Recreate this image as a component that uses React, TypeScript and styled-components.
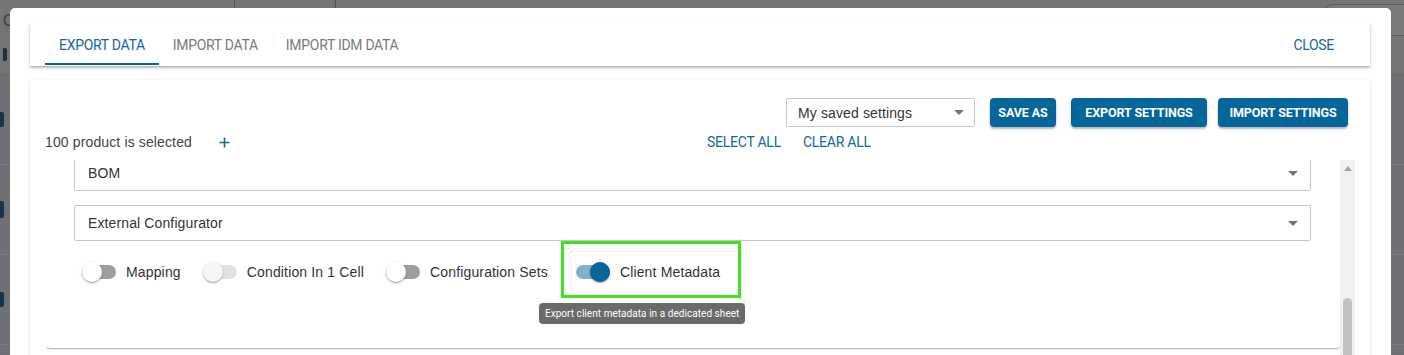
import React, { useLayoutEffect, useRef } from "react";
import styled, { createGlobalStyle } from "styled-components";

const PRIMARY = "#04669b";
const LINK = "#1169a1";

const GlobalStyle = createGlobalStyle`
  html, body {
    margin: 0;
    padding: 0;
  }

  body {
    background: #6f7174;
    font-family: "Liberation Sans", Arial, sans-serif;
    overflow: hidden;
  }
`;

/* ---------- page behind the dialog ---------- */

const Page = styled.div`
  display: flex;
  flex-direction: column;
  height: 355px;
`;

const PageHeader = styled.div`
  height: 74px;
  background: #747474;
  border-bottom: 1px solid #6a6a6a;
  display: flex;
  justify-content: space-between;
  padding-left: 3px;
`;

const HeaderLeft = styled.div`
  display: flex;
  flex-direction: column;
  gap: 18px;
  padding-top: 12px;
  color: #3c3c3c;
  font-size: 16px;
`;

const HeaderField = styled.div`
  width: 100px;
  height: 12px;
  margin: -5px 0 0 219px;
  border: 1px solid #505050;
  border-radius: 3px;
`;

const HeaderPill = styled.div`
  width: 80px;
  height: 30px;
  margin-top: 4px;
  border: 1px solid #5c5c5c;
  border-right: none;
  border-radius: 10px 0 0 10px;
  background: #7a7a7a;
`;

const PageRow = styled.div`
  height: 89px;
  border-bottom: 1px solid #7a7c7e;
  display: flex;
  align-items: center;
`;

const RowMarker = styled.div<{ $height?: number }>`
  width: 4px;
  height: ${p => p.$height ?? 15}px;
  background: #173349;
  border-radius: 0 2px 2px 0;
`;

/* ---------- dialog ---------- */

const Backdrop = styled.div`
  position: fixed;
  inset: 0;
  padding: 8px 13px 0 10px;
`;

const Dialog = styled.div`
  height: 400px;
  background: #fff;
  border-radius: 5px;
  padding: 15px 21px 0 20px;
  box-sizing: border-box;
`;

const TabBar = styled.div`
  height: 43px;
  display: flex;
  align-items: stretch;
  justify-content: space-between;
  padding: 0 22px 0 15px;
  box-shadow: 0 2px 3px rgba(0, 0, 0, 0.22), 0 1px 1px rgba(0, 0, 0, 0.12);
`;

const Tabs = styled.div`
  display: flex;
`;

const Tab = styled.div<{ $active?: boolean }>`
  position: relative;
  display: flex;
  align-items: center;
  padding: 0 14px;
  font-family: Roboto, "Liberation Sans", sans-serif;
  font-size: 14px;
  letter-spacing: -0.3px;
  color: ${p => (p.$active ? LINK : "#7a7a7a")};

  &::after {
    content: "";
    position: absolute;
    left: 0;
    right: 0;
    bottom: 1px;
    height: 2px;
    background: ${p => (p.$active ? PRIMARY : "transparent")};
  }
`;

const CloseTab = styled(Tab)`
  color: ${LINK};
`;

const ContentCard = styled.div`
  margin-top: 14px;
  padding: 18px 22px 0 16px;
  height: 300px;
  box-shadow: 0 1px 3px rgba(0, 0, 0, 0.12), 0 0 1px rgba(0, 0, 0, 0.1);
`;

const ActionRow = styled.div`
  display: flex;
  justify-content: flex-end;
  align-items: center;
  gap: 15px;
`;

const Select = styled.div<{ $width?: number; $height?: number; $pad?: number }>`
  display: flex;
  align-items: center;
  justify-content: space-between;
  box-sizing: border-box;
  width: ${p => (p.$width ? `${p.$width}px` : "100%")};
  height: ${p => p.$height ?? 36}px;
  padding: 0 ${p => (p.$pad ?? 13) - 1}px 0 ${p => p.$pad ?? 13}px;
  border: 1px solid #c6c6c6;
  border-radius: 2px;
  font-size: 14px;
  letter-spacing: 0.12px;
  color: #333;
  background: #fff;
`;

const Caret = styled.span`
  width: 0;
  height: 0;
  border-left: 5px solid transparent;
  border-right: 5px solid transparent;
  border-top: 5px solid #767676;
`;

const Button = styled.button<{ $width: number; $shift?: number }>`
  width: ${p => p.$width}px;
  height: 29px;
  margin-left: ${p => p.$shift ?? 0}px;
  padding: 0;
  border: none;
  border-radius: 4px;
  background: ${PRIMARY};
  color: #fff;
  font-family: Roboto, "Liberation Sans", sans-serif;
  font-size: 12.5px;
  font-weight: 700;
  letter-spacing: -0.1px;
  box-shadow: 0 2px 2px rgba(0, 0, 0, 0.2), 0 1px 3px rgba(0, 0, 0, 0.14);
`;

const SelectionRow = styled.div`
  display: grid;
  grid-template-columns: 1fr 1fr;
  height: 20px;
  margin-top: 5px;
  align-items: center;
`;

const SelectionInfo = styled.div`
  display: flex;
  align-items: center;
  margin-left: -1px;
  font-size: 14px;
  letter-spacing: 0.13px;
  color: #444;
`;

const AddButton = styled.span`
  display: inline-flex;
  margin-left: 27px;
  color: ${LINK};
`;

const LinkGroup = styled.div`
  display: flex;
  gap: 2px;
`;

const TextLink = styled.span`
  padding: 0 10px;
  font-family: Roboto, "Liberation Sans", sans-serif;
  font-size: 14px;
  letter-spacing: -0.25px;
  color: ${LINK};
`;

const ScrollArea = styled.div`
  display: flex;
  margin: 8px -7px 0 0;
  height: 200px;
`;

const Viewport = styled.div`
  flex: 1;
  overflow: hidden;
`;

const Sheet = styled.div`
  margin-bottom: 24px;
  padding: 0 29px 66px 28px;
  border-radius: 0 0 4px 4px;
  box-shadow: 0 1px 2px rgba(0, 0, 0, 0.25), 0 2px 1px -1px rgba(0, 0, 0, 0.12);
`;

const SelectList = styled.div`
  display: flex;
  flex-direction: column;
  gap: 14px;
`;

const ToggleRow = styled.div`
  display: flex;
  align-items: center;
  gap: 22px;
  margin-top: 21px;
  padding-left: 8px;
  height: 20px;
`;

const ToggleItem = styled.div<{ $highlight?: boolean }>`
  position: relative;
  display: flex;
  align-items: center;
  gap: 8px;
  margin-left: ${p => (p.$highlight ? 6 : 0)}px;
  font-size: 14px;
  letter-spacing: 0.15px;
  color: #333;

  &::after {
    content: ${p => (p.$highlight ? '""' : "none")};
    position: absolute;
    top: -21px;
    bottom: -16px;
    left: -15px;
    right: -21px;
    border: 3px solid #3ee41c;
  }
`;

const SwitchBox = styled.span<{ $on?: boolean; $disabled?: boolean }>`
  position: relative;
  width: 34px;
  height: 20px;
  margin-right: 2px;

  &::before {
    content: "";
    position: absolute;
    left: 0;
    right: 0;
    top: 3px;
    height: 14px;
    border-radius: 7px;
    background: ${p => (p.$on ? "#80b1cd" : p.$disabled ? "#e2e2e2" : "#9e9e9e")};
  }

  &::after {
    content: "";
    position: absolute;
    top: 0;
    left: ${p => (p.$on ? 14 : 0)}px;
    width: 20px;
    height: 20px;
    border-radius: 50%;
    background: ${p => (p.$on ? PRIMARY : p.$disabled ? "#f5f5f5" : "#fff")};
    box-shadow: 0 1px 3px rgba(0, 0, 0, 0.2), 0 1px 1px rgba(0, 0, 0, 0.14),
      0 2px 1px -1px rgba(0, 0, 0, 0.12);
  }
`;

const Tooltip = styled.div`
  position: absolute;
  top: calc(100% + 21px);
  left: -37px;
  z-index: 2;
  height: 21px;
  padding: 0 6px;
  display: flex;
  align-items: center;
  white-space: nowrap;
  border-radius: 4px;
  background: rgba(97, 97, 97, 0.94);
  color: #fff;
  font-family: Roboto, "Liberation Sans", sans-serif;
  font-size: 10px;
  letter-spacing: 0.05px;
`;

const ScrollTrack = styled.div`
  width: 15px;
  background: #f1f1f1;
  display: flex;
  flex-direction: column;
  align-items: center;
`;

const ScrollArrow = styled.span`
  margin-top: 6px;
  width: 0;
  height: 0;
  border-left: 4.5px solid transparent;
  border-right: 4.5px solid transparent;
  border-bottom: 5px solid #a3a3a3;
`;

const ScrollThumb = styled.div`
  margin-top: 127px;
  width: 9px;
  flex: 1;
  border-radius: 5px 5px 0 0;
  background: #c1c1c1;
`;

const PlusIcon = () => (
  <svg width="11" height="11" viewBox="0 0 11 11">
    <path d="M5.5 0.5v10M0.5 5.5h10" stroke="currentColor" strokeWidth="1.6" />
  </svg>
);

const toggles = [
  { label: "Mapping" },
  { label: "Condition In 1 Cell", disabled: true },
  { label: "Configuration Sets" },
  { label: "Client Metadata", on: true, highlight: true, tip: "Export client metadata in a dedicated sheet" }
];

export default function App() {
  const viewportRef = useRef<HTMLDivElement>(null);

  useLayoutEffect(() => {
    // the list is scrolled a little, so the BOM field is cut by the top edge
    if (viewportRef.current) viewportRef.current.scrollTop = 5;
  }, []);

  return (
    <>
      <GlobalStyle />
      <Page>
        <PageHeader>
          <HeaderLeft>
            <span>C</span>
            <RowMarker $height={13} />
          </HeaderLeft>
          <HeaderField />
          <div style={{ flex: 1 }} />
          <HeaderPill />
        </PageHeader>
        <PageRow>
          <RowMarker />
        </PageRow>
        <PageRow>
          <RowMarker $height={17} />
        </PageRow>
        <PageRow>
          <RowMarker />
        </PageRow>
      </Page>

      <Backdrop>
        <Dialog>
          <TabBar>
            <Tabs>
              <Tab $active>EXPORT DATA</Tab>
              <Tab>IMPORT DATA</Tab>
              <Tab>IMPORT IDM DATA</Tab>
            </Tabs>
            <CloseTab>CLOSE</CloseTab>
          </TabBar>

          <ContentCard>
            <ActionRow>
              <Select $width={189} $height={29} $pad={11}>
                My saved settings
                <Caret />
              </Select>
              <Button $width={66}>SAVE AS</Button>
              <Button $width={136}>EXPORT SETTINGS</Button>
              <Button $width={130} $shift={-4}>
                IMPORT SETTINGS
              </Button>
            </ActionRow>

            <SelectionRow>
              <SelectionInfo>
                100 product is selected
                <AddButton>
                  <PlusIcon />
                </AddButton>
              </SelectionInfo>
              <LinkGroup>
                <TextLink>SELECT ALL</TextLink>
                <TextLink>CLEAR ALL</TextLink>
              </LinkGroup>
            </SelectionRow>

            <ScrollArea>
              <Viewport ref={viewportRef}>
                <Sheet>
                  <SelectList>
                    <Select>
                      BOM
                      <Caret />
                    </Select>
                    <Select>
                      External Configurator
                      <Caret />
                    </Select>
                  </SelectList>

                  <ToggleRow>
                    {toggles.map(t => (
                      <ToggleItem key={t.label} $highlight={t.highlight}>
                        <SwitchBox $on={t.on} $disabled={t.disabled} />
                        {t.label}
                        {t.tip && <Tooltip>{t.tip}</Tooltip>}
                      </ToggleItem>
                    ))}
                  </ToggleRow>
                </Sheet>
              </Viewport>
              <ScrollTrack>
                <ScrollArrow />
                <ScrollThumb />
              </ScrollTrack>
            </ScrollArea>
          </ContentCard>
        </Dialog>
      </Backdrop>
    </>
  );
}
